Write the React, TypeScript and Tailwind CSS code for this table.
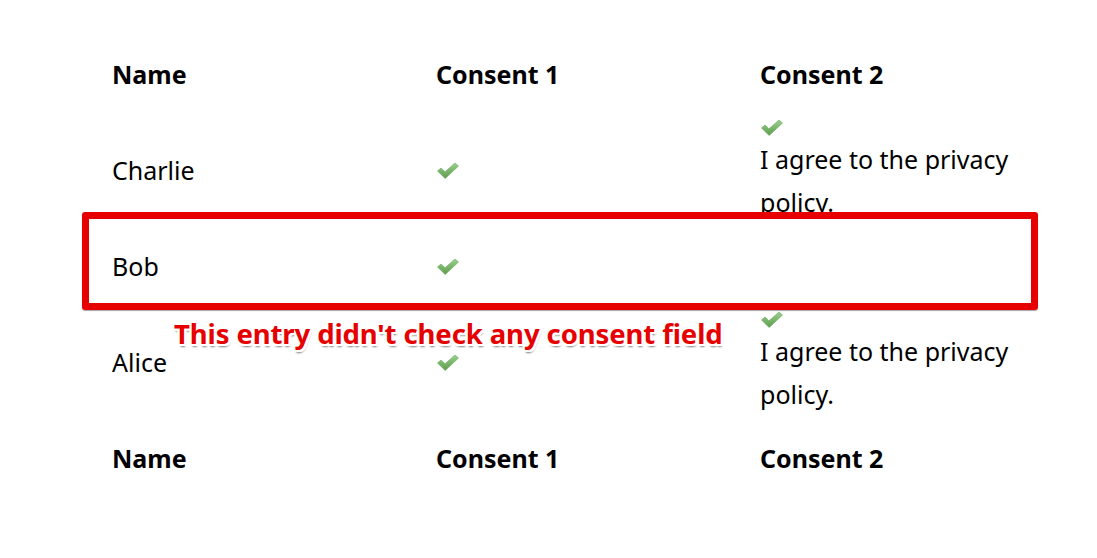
import React from 'react';

const Check = () => (
  <svg width="24" height="20" viewBox="0 0 24 20" className="block">
    <defs>
      <linearGradient id="chk" x1="0" y1="0" x2="0" y2="1">
        <stop offset="0" stopColor="#9bd08c" />
        <stop offset="1" stopColor="#5c9c4e" />
      </linearGradient>
    </defs>
    <path d="M1.5 10 L5 7 L9 10.8 L19 2 L22.5 5 L9.2 17.5 Z" fill="url(#chk)" stroke="#6aa85c" strokeWidth="0.6" strokeLinejoin="round" />
  </svg>
);

const rows = [
  { name: 'Charlie', c1: true, c2: true },
  { name: 'Bob', c1: true, c2: false },
  { name: 'Alice', c1: true, c2: true },
];

const Cell = ({ children, bold }: { children?: React.ReactNode; bold?: boolean }) => (
  <div className={`h-[96px] flex flex-col justify-center ${bold ? 'font-bold' : ''}`}>{children}</div>
);

const Consent2 = () => (
  <div className="flex flex-col">
    <Check />
    <span className="leading-[43px] mt-[0px]">I agree to the privacy policy.</span>
  </div>
);

export default function App() {
  return (
    <div className="relative w-[1097px] h-[558px] bg-white text-black overflow-hidden" style={{ fontFamily: '"Noto Sans", "Open Sans", sans-serif' }}>
      <div className="pt-[27px] pl-[112px]">
        <div className="grid grid-cols-[324px_324px_268px] text-[25px]">
          <Cell bold>Name</Cell>
          <Cell bold>Consent 1</Cell>
          <Cell bold>Consent 2</Cell>
          {rows.map((r) => (
            <React.Fragment key={r.name}>
              <Cell>{r.name}</Cell>
              <Cell>{r.c1 && <Check />}</Cell>
              <Cell>{r.c2 && <Consent2 />}</Cell>
            </React.Fragment>
          ))}
          <Cell bold>Name</Cell>
          <Cell bold>Consent 1</Cell>
          <Cell bold>Consent 2</Cell>
        </div>
      </div>

      <div className="absolute left-[82px] top-[212px] w-[956px] h-[98px] border-[7px] border-[#e60000] rounded-[3px] shadow-[0_1px_1px_rgba(0,0,0,0.35)]" />
      <div
        className="absolute left-[174px] top-[313px] text-[27.5px] font-bold text-[#e60000] tracking-[-0.1px] [text-shadow:-2px_0_0_#fff,2px_0_0_#fff,0_-2px_0_#fff,0_2px_0_#fff,-2px_-2px_0_#fff,2px_-2px_0_#fff,-2px_2px_0_#fff,2px_2px_0_#fff,1px_3px_2px_rgba(0,0,0,0.5)]"
        style={{ fontFamily: '"Noto Sans", "Open Sans", sans-serif' }}
      >
        This entry didn't check any consent field
      </div>
    </div>
  );
}
